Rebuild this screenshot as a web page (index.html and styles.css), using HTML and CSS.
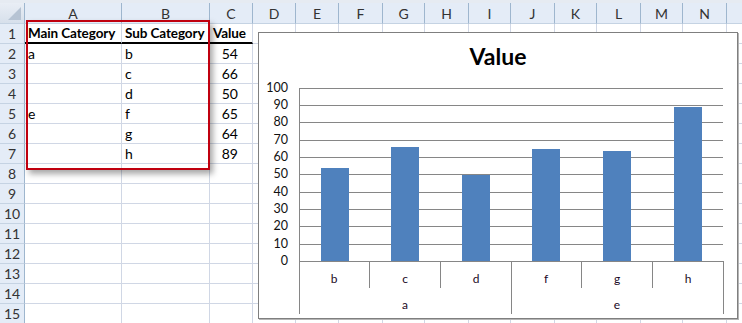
FILE: index.html
```html
<!DOCTYPE html>
<html>
  <head>
    <title>Value chart</title>
    <link rel="stylesheet" href="styles.css">
  </head>
  <body>
    <div class="strip"></div>
    <table class="sheet">
      <colgroup>
        <col style="width:25px"><col style="width:97px"><col style="width:88px"><col style="width:43px">
        <col style="width:43px"><col style="width:43px"><col style="width:44px"><col style="width:42px">
        <col style="width:44px"><col style="width:42px"><col style="width:44px"><col style="width:42px">
        <col style="width:44px"><col style="width:42px"><col style="width:44px"><col style="width:20px">
      </colgroup>
      <tr class="colhead"><th class="corner"><span class="tri"></span></th><th>A</th><th>B</th><th>C</th><th>D</th><th>E</th><th>F</th><th>G</th><th>H</th><th>I</th><th>J</th><th>K</th><th>L</th><th>M</th><th>N</th><th></th></tr>
      <tr class="titles"><th>1</th><td class="hd">Main Category</td><td class="hd">Sub Category</td><td class="hd">Value</td><td></td><td></td><td></td><td></td><td></td><td></td><td></td><td></td><td></td><td></td><td></td><td></td></tr>
      <tr><th>2</th><td>a</td><td>b</td><td class="num">54</td><td></td><td></td><td></td><td></td><td></td><td></td><td></td><td></td><td></td><td></td><td></td><td></td></tr>
      <tr><th>3</th><td></td><td>c</td><td class="num">66</td><td></td><td></td><td></td><td></td><td></td><td></td><td></td><td></td><td></td><td></td><td></td><td></td></tr>
      <tr><th>4</th><td></td><td>d</td><td class="num">50</td><td></td><td></td><td></td><td></td><td></td><td></td><td></td><td></td><td></td><td></td><td></td><td></td></tr>
      <tr><th>5</th><td>e</td><td>f</td><td class="num">65</td><td></td><td></td><td></td><td></td><td></td><td></td><td></td><td></td><td></td><td></td><td></td><td></td></tr>
      <tr><th>6</th><td></td><td>g</td><td class="num">64</td><td></td><td></td><td></td><td></td><td></td><td></td><td></td><td></td><td></td><td></td><td></td><td></td></tr>
      <tr><th>7</th><td></td><td>h</td><td class="num">89</td><td></td><td></td><td></td><td></td><td></td><td></td><td></td><td></td><td></td><td></td><td></td><td></td></tr>
      <tr><th>8</th><td></td><td></td><td></td><td></td><td></td><td></td><td></td><td></td><td></td><td></td><td></td><td></td><td></td><td></td><td></td></tr>
      <tr><th>9</th><td></td><td></td><td></td><td></td><td></td><td></td><td></td><td></td><td></td><td></td><td></td><td></td><td></td><td></td><td></td></tr>
      <tr><th>10</th><td></td><td></td><td></td><td></td><td></td><td></td><td></td><td></td><td></td><td></td><td></td><td></td><td></td><td></td><td></td></tr>
      <tr><th>11</th><td></td><td></td><td></td><td></td><td></td><td></td><td></td><td></td><td></td><td></td><td></td><td></td><td></td><td></td><td></td></tr>
      <tr><th>12</th><td></td><td></td><td></td><td></td><td></td><td></td><td></td><td></td><td></td><td></td><td></td><td></td><td></td><td></td><td></td></tr>
      <tr><th>13</th><td></td><td></td><td></td><td></td><td></td><td></td><td></td><td></td><td></td><td></td><td></td><td></td><td></td><td></td><td></td></tr>
      <tr><th>14</th><td></td><td></td><td></td><td></td><td></td><td></td><td></td><td></td><td></td><td></td><td></td><td></td><td></td><td></td><td></td></tr>
      <tr><th>15</th><td></td><td></td><td></td><td></td><td></td><td></td><td></td><td></td><td></td><td></td><td></td><td></td><td></td><td></td><td></td></tr>
    </table>

    <!-- selection box drawn over A1:B7 -->
    <div class="pick"></div>

    <!-- embedded chart, floats over the sheet -->
    <div class="chart">
      <svg class="plot" width="480" height="287" viewBox="258 32 480 287">
        <text class="title" x="498" y="65">Value</text>
        <g class="grid">
          <line x1="299" y1="88.5" x2="723" y2="88.5"/>
          <line x1="299" y1="105.5" x2="723" y2="105.5"/>
          <line x1="299" y1="122.5" x2="723" y2="122.5"/>
          <line x1="299" y1="140.5" x2="723" y2="140.5"/>
          <line x1="299" y1="157.5" x2="723" y2="157.5"/>
          <line x1="299" y1="174.5" x2="723" y2="174.5"/>
          <line x1="299" y1="192.5" x2="723" y2="192.5"/>
          <line x1="299" y1="209.5" x2="723" y2="209.5"/>
          <line x1="299" y1="226.5" x2="723" y2="226.5"/>
          <line x1="299" y1="244.5" x2="723" y2="244.5"/>
        </g>
        <g class="ylab">
          <text x="288" y="92">100</text>
          <text x="288" y="109">90</text>
          <text x="288" y="126">80</text>
          <text x="288" y="144">70</text>
          <text x="288" y="161">60</text>
          <text x="288" y="178">50</text>
          <text x="288" y="196">40</text>
          <text x="288" y="213">30</text>
          <text x="288" y="230">20</text>
          <text x="288" y="248">10</text>
          <text x="288" y="265">0</text>
        </g>
        <g class="bars">
          <rect x="321" y="168" width="28" height="93"/>
          <rect x="391" y="147" width="28" height="114"/>
          <rect x="462" y="175" width="28" height="86"/>
          <rect x="532" y="149" width="28" height="112"/>
          <rect x="603" y="151" width="28" height="110"/>
          <rect x="674" y="107" width="28" height="154"/>
        </g>
        <g class="axis">
          <line x1="299.5" y1="88" x2="299.5" y2="314"/>
          <line x1="299" y1="261.5" x2="723" y2="261.5"/>
          <line x1="369.5" y1="261" x2="369.5" y2="288"/>
          <line x1="440.5" y1="261" x2="440.5" y2="288"/>
          <line x1="511.5" y1="261" x2="511.5" y2="314"/>
          <line x1="581.5" y1="261" x2="581.5" y2="288"/>
          <line x1="652.5" y1="261" x2="652.5" y2="288"/>
          <line x1="723.5" y1="261" x2="723.5" y2="314"/>
        </g>
        <g class="xlab">
          <text x="334" y="283">b</text>
          <text x="405" y="283">c</text>
          <text x="476" y="283">d</text>
          <text x="546" y="283">f</text>
          <text x="617" y="283">g</text>
          <text x="688" y="283">h</text>
          <text x="405" y="309">a</text>
          <text x="617" y="309">e</text>
        </g>
      </svg>
    </div>
  </body>
</html>
```

FILE: styles.css
```css
body { margin: 0; background: #fff; overflow: hidden; font-family: Lato, "Liberation Sans", sans-serif; position: relative; }

.strip { height: 3px; background: #e6ebf2; }

.sheet { border-collapse: separate; border-spacing: 0; table-layout: fixed; width: 747px; }
.sheet td, .sheet th { box-sizing: border-box; height: 20px; padding: 0 3px; border-right: 1px solid #d0d7e5; border-bottom: 1px solid #d0d7e5; font-size: 14px; white-space: nowrap; overflow: hidden; color: #000; font-weight: normal; }

.colhead th { height: 21px; background: linear-gradient(#f3f7fc, #dde7f3); border-right: 1px solid #9eb6ce; border-bottom: 1px solid #9eb6ce; color: #333; text-align: center; font-size: 14px; }
.sheet th { background: #e4ecf7; border-right: 1px solid #9eb6ce; border-bottom-color: #c5d3e3; text-align: center; color: #333; padding: 0; }
.colhead .corner { position: relative; background: linear-gradient(#e9eef5, #d7e0eb); }
.tri { position: absolute; right: 3px; bottom: 3px; width: 0; height: 0; border-left: 13px solid transparent; border-bottom: 13px solid #b6c3d3; }

.titles .hd { font-weight: bold; font-size: 13.5px; letter-spacing: -0.1px; overflow: visible; border-bottom: 2px solid #000; }
.num { text-align: right; padding-right: 14px !important; }

.pick { position: absolute; left: 26px; top: 20px; width: 184px; height: 150px; box-sizing: border-box; border: 2px solid #c0000f; box-shadow: 3px 4px 6px rgba(0, 0, 0, 0.35); }

.chart { position: absolute; left: 258px; top: 32px; width: 480px; height: 287px; box-sizing: border-box; border: 1px solid #7f7f7f; box-shadow: 1px 1px 0 #b5b5b5; background: #fff; overflow: hidden; }
.plot { position: absolute; left: -1px; top: -1px; display: block; }
.plot text { font-family: Lato, "Liberation Sans", sans-serif; }
.title { font-size: 23px; font-weight: bold; text-anchor: middle; fill: #000; }
.grid line, .axis line { stroke: #868686; stroke-width: 1; shape-rendering: crispEdges; }
.bars rect { fill: #4f81bd; }
.ylab text { font-size: 12.5px; text-anchor: end; fill: #111; }
.xlab text { font-size: 12px; text-anchor: middle; fill: #1c0a26; }
```
